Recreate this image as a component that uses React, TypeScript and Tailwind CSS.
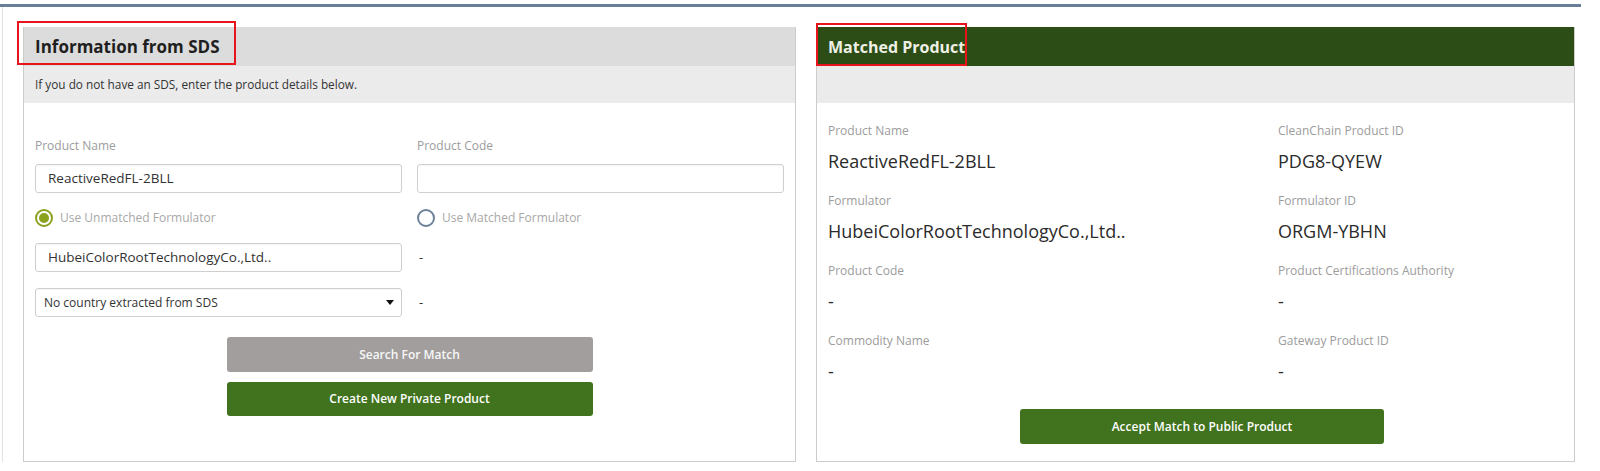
import React from "react";

// SDS product matching: left = what was read from the SDS, right = the public match.
function Radio({ checked }: { checked?: boolean }) {
  return checked ? (
    <span className="flex h-[18px] w-[18px] items-center justify-center rounded-full border-2 border-[#8aa21e] bg-white">
      <span className="h-[10px] w-[10px] rounded-full bg-[#8aa21e]" />
    </span>
  ) : (
    <span className="h-[18px] w-[18px] rounded-full border-2 border-[#6d8299] bg-white" />
  );
}

function Field({ label, value }: { label: string; value: string }) {
  return (
    <div className="mb-[19px]">
      <div className="h-[18px] text-[12px] leading-[18px] text-[#9c9c9c]">{label}</div>
      <div className="mt-[9px] h-[24px] text-[18px] leading-[24px] text-[#2b2b2b]">{value}</div>
    </div>
  );
}

const inputCls =
  "flex h-[29px] items-center rounded-[3px] border border-[#cfcfcf] bg-white shadow-[inset_0_1px_1px_rgba(0,0,0,0.04)]";

export default function App() {
  return (
    <div className="h-[471px] w-[1600px] bg-white font-['Open_Sans',_'Liberation_Sans',_sans-serif]">
      <div className="mt-[4px] w-[1581px] border-t-[3px] border-[#687f97]">
        <div className="ml-[2px] flex border-l border-[#e2e2e2] pl-[20px] pr-[6px] pt-[20px]">
          {/* left: information from SDS */}
          <div className="w-[773px] border-x border-b border-[#cccccc]">
            <div className="relative flex h-[39px] items-center bg-[#dcdcdc] pl-[11px]">
              <span className="text-[17px] font-bold text-[#1f1f1f]">Information from SDS</span>
              <div className="absolute -left-[7px] -top-[6px] h-[44px] w-[219px] border-2 border-[#e8141b]" />
            </div>
            <div className="flex h-[37px] items-center bg-[#ebebeb] pl-[11px] text-[11.8px] text-[#333]">
              If you do not have an SDS, enter the product details below.
            </div>

            <div className="px-[11px] pb-[45px] pt-[34px]">
              <div className="grid grid-cols-2 gap-x-[15px]">
                <div>
                  <div className="h-[18px] text-[12px] leading-[18px] text-[#9c9c9c]">Product Name</div>
                  <div className={`${inputCls} mt-[9px] pl-[12px] text-[13.5px] text-[#333]`}>ReactiveRedFL-2BLL</div>
                  <div className="mt-[16px] flex h-[18px] items-center gap-[7px]">
                    <Radio checked />
                    <span className="text-[12px] text-[#a8a8a8]">Use Unmatched Formulator</span>
                  </div>
                  <div className={`${inputCls} mt-[16px] pl-[12px] text-[13.5px] text-[#333]`}>
                    HubeiColorRootTechnologyCo.,Ltd..
                  </div>
                  <div className={`${inputCls} mt-[16px] justify-between pl-[8px] pr-[7px] text-[12px] text-[#333]`}>
                    <span>No country extracted from SDS</span>
                    <svg width="8" height="5" viewBox="0 0 8 5">
                      <polygon points="0,0 8,0 4,5" fill="#111" />
                    </svg>
                  </div>
                </div>
                <div>
                  <div className="h-[18px] text-[12px] leading-[18px] text-[#9c9c9c]">Product Code</div>
                  <div className={`${inputCls} mt-[9px]`} />
                  <div className="mt-[16px] flex h-[18px] items-center gap-[7px]">
                    <Radio />
                    <span className="text-[12px] text-[#a8a8a8]">Use Matched Formulator</span>
                  </div>
                  <div className="mt-[16px] flex h-[29px] items-center pl-[2px] text-[13px] text-[#333]">-</div>
                  <div className="mt-[16px] flex h-[29px] items-center pl-[2px] text-[13px] text-[#333]">-</div>
                </div>
              </div>

              <div className="mt-[20px] flex flex-col items-center gap-[10px]">
                <button
                  type="button"
                  className="h-[35px] w-[366px] rounded-[3px] bg-[#a19e9d] text-[12px] font-semibold text-[#f7f7f7]"
                >
                  Search For Match
                </button>
                <button
                  type="button"
                  className="h-[34px] w-[366px] rounded-[3px] bg-[#41731e] text-[12px] font-semibold text-white"
                >
                  Create New Private Product
                </button>
              </div>
            </div>
          </div>

          {/* right: matched product */}
          <div className="ml-[20px] flex-1 border-x border-b border-[#cccccc]">
            <div className="relative flex h-[39px] items-center bg-[#2c4d15] pl-[11px]">
              <span className="text-[16px] font-bold text-[#eef0e6]">Matched Product</span>
              <div className="absolute -left-px -top-[4px] h-[43px] w-[151px] border-2 border-[#e8141b]" />
            </div>
            <div className="h-[37px] bg-[#ebebeb]" />

            <div className="px-[11px] pb-[15px] pt-[19px]">
              <div className="grid grid-cols-[450px_1fr]">
                <div>
                  <Field label="Product Name" value="ReactiveRedFL-2BLL" />
                  <Field label="Formulator" value="HubeiColorRootTechnologyCo.,Ltd.." />
                  <Field label="Product Code" value="-" />
                  <Field label="Commodity Name" value="-" />
                </div>
                <div>
                  <Field label="CleanChain Product ID" value="PDG8-QYEW" />
                  <Field label="Formulator ID" value="ORGM-YBHN" />
                  <Field label="Product Certifications Authority" value="-" />
                  <Field label="Gateway Product ID" value="-" />
                </div>
              </div>
              <div className="mt-[7px] flex">
                <button
                  type="button"
                  className="ml-[192px] h-[35px] w-[364px] rounded-[3px] bg-[#41731e] text-[12px] font-semibold text-white"
                >
                  Accept Match to Public Product
                </button>
              </div>
            </div>
          </div>
        </div>
      </div>
    </div>
  );
}
